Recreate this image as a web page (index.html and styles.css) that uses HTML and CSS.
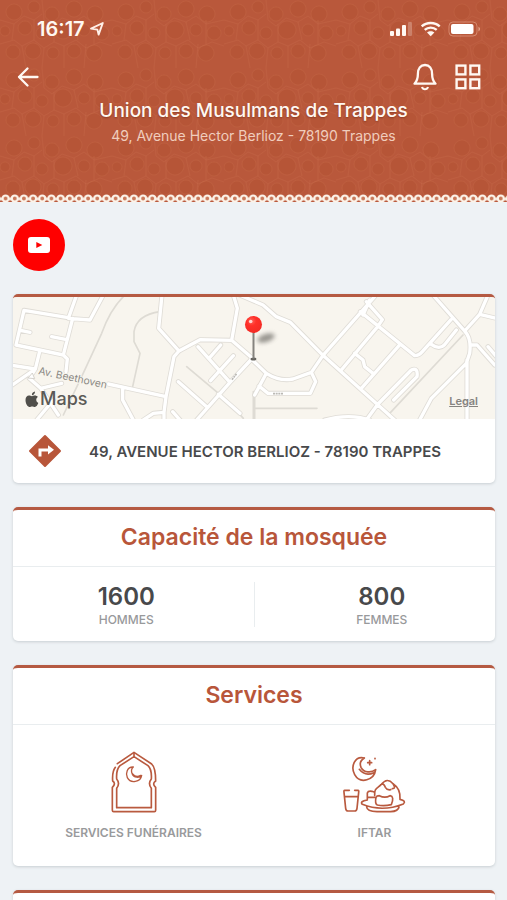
FILE: index.html
```html
<!DOCTYPE html>
<html lang="fr">
<head>
<meta charset="utf-8">
<meta name="viewport" content="width=device-width, initial-scale=1">
<title>Union des Musulmans de Trappes</title>
<link rel="stylesheet" href="styles.css">
</head>
<body>
<header class="hero">
  <svg class="hero-pattern" aria-hidden="true">
    <defs>
      <pattern id="mosaic" width="112" height="68" patternUnits="userSpaceOnUse">
        <g fill="#b04f30" fill-opacity=".35" stroke="#c86a49" stroke-opacity=".28" stroke-width="1">
          <circle cx="14" cy="12" r="8"/><circle cx="34" cy="7" r="6"/><circle cx="52" cy="14" r="7"/><circle cx="74" cy="9" r="8"/><circle cx="95" cy="14" r="8"/>
          <circle cx="5" cy="31" r="5"/><circle cx="25" cy="28" r="7"/><circle cx="42" cy="33" r="6"/><circle cx="63" cy="30" r="9"/><circle cx="84" cy="30" r="6"/><circle cx="102" cy="33" r="7"/>
          <circle cx="13" cy="52" r="7"/><circle cx="33" cy="51" r="8"/><circle cx="53" cy="53" r="6"/><circle cx="74" cy="51" r="7"/><circle cx="94" cy="53" r="8"/>
        </g>
        <g fill="none" stroke="#ca6e4d" stroke-opacity=".3" stroke-width="1">
          <path d="M0 20l14 4 10-8 10 4 8-6M42 0l2 20 8 6 10-8 12 4 10-6 10 8 18-4M0 44l14-4 8 6 12-6 10 8 10-6 10 4 12-6 10 8 14-6 12 4M22 46l4 22M44 48l-2 20M64 46v22M86 44l-2 24M14 24l-2 16M34 20v20M54 24v18M74 22l4 18M94 20v24"/>
        </g>
      </pattern>
      <pattern id="lace" width="9.17" height="9" patternUnits="userSpaceOnUse" x="1">
        <path d="M0 8h9.17v1H0z" fill="#eef2f5"/>
        <circle cx="4.58" cy="4.5" r="3" fill="#c9795b" stroke="#fcf4ea" stroke-width="2.2"/>
        <path d="M0 3.4v3M9.17 3.4v3" stroke="#fcf4ea" stroke-width="1.6"/>
      </pattern>
    </defs>
    <rect width="100%" height="100%" fill="url(#mosaic)"/>
  </svg>
  <div class="status">
    <div class="clock"><span>16:17</span>
      <svg width="14" height="14" viewBox="0 0 14 14" aria-hidden="true"><path d="M1 6.600 12.800 1 8.600 12.600 7.400 7.600z" fill="none" stroke="#fff0e8" stroke-width="1.900" stroke-linejoin="round"/></svg>
    </div>
    <svg class="signals" width="92" height="18" viewBox="0 0 92 18" aria-hidden="true">
      <g fill="#fff8f2"><rect x="0" y="11" width="4" height="5" rx="1"/><rect x="6" y="8.500" width="4" height="7.500" rx="1"/><rect x="12" y="5" width="4" height="11" rx="1"/><rect x="18" y="2" width="4" height="14" rx="1" opacity=".25"/></g>
      <g fill="none" stroke="#fff8f2" stroke-width="2.400"><path d="M31.700 6.300c5-4.500 13-4.500 18 0"/><path d="M34.700 9.900c3.500-3 8.500-3 12 0"/></g><path d="M37 12.600c2-1.700 5.400-1.700 7.400 0L40.700 16.200z" fill="#fff8f2"/>
      <rect x="59" y="2" width="28" height="14" rx="4" fill="none" stroke="#e9a98f" stroke-opacity=".6"/><rect x="61" y="4" width="22.500" height="10" rx="2" fill="#fff"/><path d="M88.500 6.500q3 2.500 0 5z" fill="#e9a98f"/>
    </svg>
  </div>
  <nav class="toolbar">
    <button class="tool" type="button" aria-label="Retour"><svg width="22" height="22" viewBox="0 0 22 22"><path d="M20.500 11H2M10.500 2.500L2 11l8.500 8.500" fill="none" stroke="#fff8f2" stroke-width="2.300" stroke-linejoin="round" stroke-linecap="round"/></svg></button>
    <div class="tools">
      <button class="tool" type="button" aria-label="Notifications"><svg width="26" height="28" viewBox="0 0 26 28"><path d="M2.500 20.700h21c-2.500-2.700-3.400-5-3.400-9.800C20.100 5.500 17.500 2 13 2s-7.100 3.500-7.100 8.900c0 4.800-.9 7.100-3.400 9.800z" fill="none" stroke="#fff8f2" stroke-width="2.300" stroke-linejoin="round"/><path d="M10 24c1 3 5 3 6 0" fill="none" stroke="#fff8f2" stroke-width="2.200"/></svg></button>
      <button class="tool" type="button" aria-label="Menu"><svg width="26" height="26" viewBox="0 0 26 26"><g fill="none" stroke="#fff8f2" stroke-width="2.400"><rect x="1.600" y="1.600" width="8.800" height="8.800"/><rect x="15.400" y="1.600" width="8.800" height="8.800"/><rect x="1.600" y="15.400" width="8.800" height="8.800"/><rect x="15.400" y="15.400" width="8.800" height="8.800"/></g></svg></button>
    </div>
  </nav>
  <h1 class="name">Union des Musulmans de Trappes</h1>
  <p class="street">49, Avenue Hector Berlioz - 78190 Trappes</p>
  <svg class="lace" aria-hidden="true"><rect width="100%" height="9" fill="url(#lace)"/></svg>
</header>
<main class="content">
  <a class="youtube" href="#" aria-label="YouTube"><svg width="22" height="16" viewBox="0 0 22 16"><rect width="22" height="16" rx="3" fill="#fff"/><path d="M8.300 5v6l6-3z" fill="red"/></svg></a>

  <section class="card">
    <div class="map">
      <svg class="map-art" viewBox="0 0 1446 366" preserveAspectRatio="xMidYMid slice" aria-hidden="true">
        <defs>
          <g id="roads-west">
            <path d="M230 30L205 100L270 105L310 30M205 98L72 76L48 180L190 210L218 100M62 136L90 142M155 155L200 164M120 195L106 252L30 240M190 210L202 222L198 260M106 252L30 305M106 252L88 280L122 310L175 390M122 310L185 295M110 405L160 345M325 297L498 335M368 312L368 345L400 405M430 405L460 385L492 382L498 335M492 405V382M486 30L476 130L537 198L600 164L695 166L712 70L700 30M537 198L522 215L498 335M695 166L760 222M594 185L690 292L755 222M627 220L662 180M632 287L700 212M535 290L620 365M655 328L720 385M690 292L590 405M518 380L540 405"/>
          </g>
          <g id="roads-east">
            <path d="M-40 30L30 60L70 95L112 112L210 211L425 405M-5 222L40 265Q80 290 120 282L175 262L210 211L365 35M175 262L188 290L172 325L45 325L18 303M40 265L5 330M322 80L485 212Q498 212 508 200L594 104M340 50L388 104L374 125L265 255M330 90L350 45M305 205L330 225L335 245L360 265M438 182L325 310M375 357L475 255Q496 246 492 275L422 345M375 357L340 405M535 178Q558 195 574 180L610 135M540 30L635 138Q656 160 650 205L640 235L535 340L500 405M642 225V405M635 138L680 88L705 30M680 88L730 100M652 180H672L725 240M705 185L735 220M215 405Q290 385 350 405"/>
          </g>
        </defs>
        <rect width="1446" height="366" fill="#f8f5ee"/>
        <g fill="none" stroke-linejoin="round" stroke-linecap="round">
          <g stroke="#dedbd4" stroke-width="5">
            <path transform="translate(-39 -36)" d="M370 35Q330 75 305 145L245 275L190 390M480 80Q410 90 402 140V170L420 205L398 305M560 245L685 350L730 400M760 320V405"/>
            <path transform="translate(720 -36)" d="M5 370H192M630 150L410 385M5 330V405"/>
          </g>
          <g stroke="#dfdcd6" stroke-width="15"><use href="#roads-west" transform="translate(-39 -36)"/><use href="#roads-east" transform="translate(720 -36)"/></g>
          <g stroke="#fff" stroke-width="10"><use href="#roads-west" transform="translate(-39 -36)"/><use href="#roads-east" transform="translate(720 -36)"/></g>
          <path d="M657 248l14-18M780 290h30" stroke="#bbb9b4" stroke-width="5" stroke-dasharray="6 2" stroke-linecap="butt"/>
        </g>
        <path d="M58 228l-13 15 20 2z" fill="#fff" stroke="#d5d2cc" stroke-width="3"/>
        <text class="road-name" transform="translate(75 231) rotate(12)">Av. Beethoven</text>
      </svg>
      <svg class="pin" width="44" height="48" viewBox="0 0 44 48" aria-hidden="true">
        <defs><filter id="soft" x="-50%" y="-50%" width="200%" height="200%"><feGaussianBlur stdDeviation="2"/></filter><radialGradient id="head" cx=".38" cy=".3" r=".7"><stop offset="0" stop-color="#ff6259"/><stop offset=".4" stop-color="#ff3029"/><stop offset="1" stop-color="#f32b25"/></radialGradient></defs>
        <ellipse cx="25" cy="24" rx="9" ry="4" fill="#6f6d68" opacity=".7" filter="url(#soft)" transform="rotate(-18 25 24)"/>
        <ellipse cx="12.500" cy="45" rx="3" ry="1.500" fill="#66645f"/><path d="M12.500 18v26.500" stroke="#85837f" stroke-width="2"/>
        <circle cx="12.500" cy="10.500" r="8.500" fill="url(#head)"/><circle cx="9.700" cy="7.500" r="1.800" fill="#ffd5d0"/>
      </svg>
      <div class="brand"><svg width="14" height="17" viewBox="0 0 14 17" aria-hidden="true"><path d="M10 .5C8 .8 6.700 2.300 6.900 4.200 8.800 4.200 10.100 2.500 10 .5zM7 5.300C5.900 5.300 5.200 4.600 4 4.600 2 4.600.5 6.300.5 9c0 3.300 2 7 4 7 1 0 1.500-.6 2.700-.6 1.100 0 1.600.6 2.600.6 1.600 0 2.900-2.300 3.500-4-2.600-1.200-2.700-4.600-.4-5.900-.8-1-1.900-1.500-3-1.500-1.300 0-2 .7-2.900.7z" fill="#504f4b"/></svg><span>Maps</span></div>
      <a class="legal" href="#">Legal</a>
    </div>
    <a class="directions" href="#">
      <svg width="34" height="34" viewBox="0 0 34 34" aria-hidden="true"><path d="M17 2L32 17 17 32 2 17z" fill="#b8563a" stroke="#b8563a" stroke-width="2" stroke-linejoin="round"/><path d="M12 22.500V16h9.500" fill="none" stroke="#fff" stroke-width="3"/><path d="M20 11.200v9.200l6-4.600z" fill="#fff"/></svg>
      <span>49, AVENUE HECTOR BERLIOZ - 78190 TRAPPES</span>
    </a>
  </section>

  <section class="card">
    <h2 class="card-title">Capacité de la mosquée</h2>
    <dl class="capacity">
      <div class="figure"><dt>HOMMES</dt><dd>1600</dd></div>
      <div class="figure"><dt>FEMMES</dt><dd>800</dd></div>
    </dl>
  </section>

  <section class="card">
    <h2 class="card-title">Services</h2>
    <ul class="services">
      <li class="service">
        <svg width="66" height="66" viewBox="0 0 198 198" aria-hidden="true"><g fill="none" stroke="#b95a3f" stroke-width="5" stroke-linecap="round" stroke-linejoin="round"><path d="M49 44L99 10L152 45Q164 56 164 96Q152 104 164 115V184Q164 188 160 188H38Q34 188 34 184V115Q46 104 35 96Q33 68 43 55"/><path d="M57 50L99 23L141 50Q153 62 151 90Q140 103 151 118V176H47V118Q58 103 47 90Q45 62 57 50M99 12V22"/><path d="M97 54C78 53 73 74 79 86C89 105 119 99 122 79C115 88 98 86 94 76C90 67 91 59 97 54ZM95 75Q105 88 119 79" stroke-width="4"/></g></svg>
        <span>SERVICES FUNÉRAIRES</span>
      </li>
      <li class="service">
        <svg width="66" height="66" viewBox="0 0 198 198" aria-hidden="true"><g fill="none" stroke="#b95a3f" stroke-width="5" stroke-linecap="round" stroke-linejoin="round"><path d="M67 27C38 20 25 53 38 77C55 107 97 93 101 62C89 72 65 72 57 55C52 43 57 33 67 27M52 61Q69 83 96 71M83 35V47M77 41H89M99 28v1"/><path d="M22 124H8Q5 124 6 130L11 178Q12 186 18 186H38Q44 186 45 178L50 130Q51 124 48 124H38M8 143H48"/><path d="M98 139C96 118 106 118 118 106Q136 84 153 104Q176 119 174 150M116 107Q125 101 130 115Q135 124 146 122M153 104Q163 119 151 119M76 151V132Q78 125 90 127L98 130M77 145H99M76 153Q52 157 61 166Q121 190 184 165Q194 155 174 151M74 174Q75 187 105 188H146Q169 187 171 174M102 145Q98 164 106 168Q126 172 148 167Q158 142 144 140Q129 149 112 140Q104 140 102 145"/></g></svg>
        <span>IFTAR</span>
      </li>
    </ul>
  </section>

  <section class="card next"></section>
</main>
</body>
</html>
```

FILE: styles.css
```css
* { box-sizing: border-box; }
html { background: #eef2f5; }
body {
  display: flex;
  flex-direction: column;
  min-height: 100vh;
  margin: 0;
  background: #eef2f5;
  color: #48494b;
  font-family: Inter, "Liberation Sans", sans-serif;
}
h1, h2, p, dl, dd, ul { margin: 0; padding: 0; }
svg { display: block; }
a { color: inherit; text-decoration: none; }

.hero {
  position: relative;
  padding: 20px 0 58px;
  background: #b9583b;
  color: #fff8f2;
  text-align: center;
}
.hero-pattern { position: absolute; inset: 0; width: 100%; height: 100%; }
.status, .toolbar, .name, .street { position: relative; }
.status {
  display: flex;
  align-items: center;
  justify-content: space-between;
  height: 18px;
  padding: 0 25px 0 37px;
}
.clock { display: flex; align-items: center; gap: 5px; font-size: 20px; font-weight: 600; }
.toolbar {
  display: flex;
  align-items: center;
  justify-content: space-between;
  height: 28px;
  margin-top: 25px;
  padding: 0 26px 0 17px;
}
.tools { display: flex; align-items: center; gap: 17px; }
.tool { padding: 0; border: 0; background: none; }
.name { margin-top: 7px; font-size: 19px; font-weight: 500; line-height: 26px; text-shadow: 0 1px 2px #8a3c24; }
.street { margin-top: 3px; font-size: 14px; line-height: 18px; color: #f0cdbd; }
.lace { position: absolute; bottom: 0; left: 0; width: 100%; height: 9px; }

.content {
  display: flex;
  flex: 1;
  flex-direction: column;
  padding: 0 12px 0 13px;
}
.youtube {
  display: flex;
  align-items: center;
  justify-content: center;
  width: 52px;
  height: 52px;
  margin: 16px 0 23px;
  border-radius: 50%;
  background: red;
}
.card {
  margin-bottom: 24px;
  overflow: hidden;
  border-top: 3px solid #b55a42;
  border-radius: 5px;
  background: #fff;
  box-shadow: 0 1px 3px #c8ced2;
}
.map { position: relative; height: 122px; }
.map-art { width: 100%; height: 100%; }
.road-name { font-size: 31px; fill: #8b8984; stroke: #f8f5ee; stroke-width: 6px; paint-order: stroke; }
.pin { position: absolute; left: 50%; top: 17px; margin-left: -13px; }
.brand {
  position: absolute;
  left: 12px;
  bottom: 8px;
  display: flex;
  align-items: center;
  gap: 1px;
  color: #5b5a56;
  font-size: 18px;
  font-weight: 500;
  line-height: 24px;
}
.legal {
  position: absolute;
  right: 17px;
  bottom: 10px;
  color: #858380;
  font-size: 11px;
  font-weight: 600;
  line-height: 16px;
  text-decoration: underline;
}
.directions {
  display: flex;
  align-items: center;
  gap: 27px;
  height: 64px;
  padding: 0 15px;
  font-size: 15px;
  font-weight: 600;
}
.card-title {
  height: 57px;
  border-bottom: 1px solid #e9edef;
  color: #b8563a;
  font-size: 23px;
  font-weight: 600;
  line-height: 54px;
  text-align: center;
}
.capacity { display: flex; padding: 15px 0 14px; }
.figure {
  display: flex;
  flex: 1;
  flex-direction: column-reverse;
  align-items: center;
  height: 45px;
  padding-right: 14px;
}
.figure + .figure { padding: 0 0 0 14px; border-left: 1px solid #e9edef; }
.figure dt { color: #98999b; font-size: 12px; font-weight: 500; line-height: 15px; }
.figure dd { font-size: 24px; font-weight: 600; line-height: 30px; }
.services { display: flex; padding: 24px 0 24px; list-style: none; }
.service {
  display: flex;
  flex: 1;
  flex-direction: column;
  align-items: center;
  gap: 9px;
  color: #999a9c;
  font-size: 12px;
  font-weight: 600;
  line-height: 18px;
}
.next { flex: 1; margin-bottom: 0; border-radius: 5px 5px 0 0; }
```
